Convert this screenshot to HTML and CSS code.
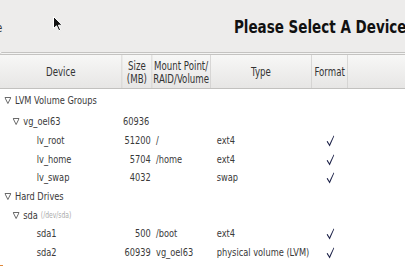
FILE: index.html
```html
<html><head><title>Please Select A Device</title>
<link rel="stylesheet" href="styles.css">
</head>
<body>
<div class="stage">
  <div class="topbar">
    <span class="cut-label">e</span>
    <h1 class="title">Please Select A Device</h1>
  </div>
  <div class="rule"></div>
  <div class="grid head">
    <div class="hcell">Device</div>
    <div class="hcell">Size<br>(MB)</div>
    <div class="hcell">Mount Point/<br>RAID/Volume</div>
    <div class="hcell">Type</div>
    <div class="hcell">Format</div>
    <div class="hcell last"></div>
  </div>
  <div class="rows">
    <div class="grid row first">
      <div class="dev lvl0"><svg class="twisty" width="9" height="7" viewBox="0 0 9 7"><polygon points="0.5,0.5 8.5,0.5 4.5,6.5"/></svg>LVM Volume Groups</div>
      <div class="size"></div><div class="mount"></div><div class="type"></div><div class="fmt"></div><div></div>
    </div>
    <div class="grid row">
      <div class="dev lvl1"><svg class="twisty" width="9" height="7" viewBox="0 0 9 7"><polygon points="0.5,0.5 8.5,0.5 4.5,6.5"/></svg>vg_oel63</div>
      <div class="size left">60936</div><div class="mount"></div><div class="type"></div><div class="fmt"></div><div></div>
    </div>
    <div class="grid row">
      <div class="dev lvl2">lv_root</div>
      <div class="size">51200</div><div class="mount">/</div><div class="type">ext4</div>
      <div class="fmt"><svg class="check" width="11" height="12" viewBox="0 0 11 12"><polygon points="0.4,6.6 1.9,5.9 4.2,9.2 9.9,0.4 10.7,0.9 4.6,11.4"/></svg></div><div></div>
    </div>
    <div class="grid row">
      <div class="dev lvl2">lv_home</div>
      <div class="size">5704</div><div class="mount">/home</div><div class="type">ext4</div>
      <div class="fmt"><svg class="check" width="11" height="12" viewBox="0 0 11 12"><polygon points="0.4,6.6 1.9,5.9 4.2,9.2 9.9,0.4 10.7,0.9 4.6,11.4"/></svg></div><div></div>
    </div>
    <div class="grid row">
      <div class="dev lvl2">lv_swap</div>
      <div class="size">4032</div><div class="mount"></div><div class="type">swap</div>
      <div class="fmt"><svg class="check" width="11" height="12" viewBox="0 0 11 12"><polygon points="0.4,6.6 1.9,5.9 4.2,9.2 9.9,0.4 10.7,0.9 4.6,11.4"/></svg></div><div></div>
    </div>
    <div class="grid row">
      <div class="dev lvl0"><svg class="twisty" width="9" height="7" viewBox="0 0 9 7"><polygon points="0.5,0.5 8.5,0.5 4.5,6.5"/></svg>Hard Drives</div>
      <div class="size"></div><div class="mount"></div><div class="type"></div><div class="fmt"></div><div></div>
    </div>
    <div class="grid row">
      <div class="dev lvl1"><svg class="twisty" width="9" height="7" viewBox="0 0 9 7"><polygon points="0.5,0.5 8.5,0.5 4.5,6.5"/></svg>sda <span class="path">(/dev/sda)</span></div>
      <div class="size"></div><div class="mount"></div><div class="type"></div><div class="fmt"></div><div></div>
    </div>
    <div class="grid row">
      <div class="dev lvl2">sda1</div>
      <div class="size">500</div><div class="mount">/boot</div><div class="type">ext4</div>
      <div class="fmt"><svg class="check" width="11" height="12" viewBox="0 0 11 12"><polygon points="0.4,6.6 1.9,5.9 4.2,9.2 9.9,0.4 10.7,0.9 4.6,11.4"/></svg></div><div></div>
    </div>
    <div class="grid row">
      <div class="dev lvl2">sda2</div>
      <div class="size">60939</div><div class="mount">vg_oel63</div><div class="type">physical volume (LVM)</div>
      <div class="fmt"><svg class="check" width="11" height="12" viewBox="0 0 11 12"><polygon points="0.4,6.6 1.9,5.9 4.2,9.2 9.9,0.4 10.7,0.9 4.6,11.4"/></svg></div><div></div>
    </div>
  </div>
  <div class="dash"></div>
</div>
<svg class="cursor" width="10" height="16" viewBox="0 0 10 16"><path d="M0.5 0.5 L0.5 12.5 L3.5 9.8 L5.8 14.8 L7.6 14 L5.4 9.2 L9.3 9.2 Z"/></svg>
</body></html>
```
FILE: styles.css
```css
body {
  margin: 0;
  padding: 0;
  background: #fff;
  overflow: hidden;
  position: relative;
  width: 405px;
  height: 271px;
}
.stage {
  width: 540px;
  transform: scaleX(0.75);
  transform-origin: 0 0;
  font-family: 'DejaVu Sans', sans-serif;
  color: #3a3a3a;
}
.topbar {
  height: 52px;
  background: #edeceb;
  display: flex;
  align-items: center;
  justify-content: space-between;
}
.cut-label {
  margin-left: -5px;
  font-size: 13px;
  color: #333;
  margin-top: 2px;
}
.title {
  margin: 1px -2px 0 0;
  font-size: 18px;
  font-weight: bold;
  color: #111;
  white-space: nowrap;
}
.rule {
  height: 1px;
  border-top: 1px solid #c4c3c1;
  border-bottom: 1px solid #c4c3c1;
  background: #f4f4f3;
  border-top-left-radius: 3px;
}
.grid {
  display: grid;
  grid-template-columns: 163px 40px 78px 135px 48px 1fr;
}
.head {
  height: 33px;
  background: linear-gradient(#f7f7f6, #e7e6e5);
  border-bottom: 1px solid #c2c1bf;
  font-size: 11.5px;
  color: #333;
}
.hcell {
  display: flex;
  align-items: center;
  justify-content: center;
  text-align: center;
  line-height: 13px;
  padding-top: 2px;
  border-right: 1px solid #cfcecc;
}
.hcell.last {
  border-right: none;
}
.rows {
  font-size: 11px;
}
.row {
  height: 18.7px;
  align-items: center;
  white-space: nowrap;
}
.row.first {
  height: 23.3px;
}
.dev {
  display: flex;
  align-items: center;
}
.lvl0 { padding-left: 6px; }
.lvl1 { padding-left: 17px; }
.lvl2 { padding-left: 49px; }
.twisty {
  fill: none;
  stroke: #555;
  stroke-width: 1;
  margin-right: 5px;
}
.path {
  font-size: 8px;
  color: #aaa;
  margin-left: 4px;
}
.size {
  text-align: right;
  padding-right: 2px;
}
.size.left {
  text-align: left;
  padding-left: 1px;
}
.mount {
  padding-left: 5px;
}
.type {
  padding-left: 8px;
}
.fmt {
  display: flex;
  justify-content: center;
  align-items: center;
}
.check {
  fill: #1c2148;
  margin-top: 1px;
}
.dash {
  width: 4px;
  height: 1px;
  margin-top: 3px;
  background: #e0893a;
}
.cursor {
  position: absolute;
  left: 53px;
  top: 16px;
  fill: #111;
  stroke: #fff;
  stroke-width: 1;
}
```
